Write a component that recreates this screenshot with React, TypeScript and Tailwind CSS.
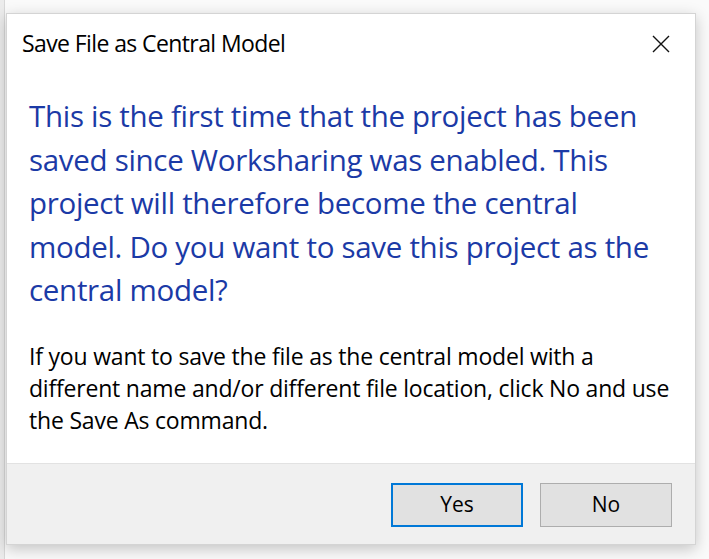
import React from "react";

const font = { fontFamily: '"Open Sans", "Noto Sans", sans-serif' };

export default function App() {
  const blueLines = [
    "This is the first time that the project has been",
    "saved since Worksharing was enabled. This",
    "project will therefore become the central",
    "model. Do you want to save this project as the",
    "central model?",
  ];
  const bodyLines = [
    "If you want to save the file as the central model with a",
    "different name and/or different file location, click No and use",
    "the Save As command.",
  ];
  return (
    <div className="w-[709px] h-[559px] bg-[#fafafa] overflow-hidden relative" style={font}>
      <div className="absolute left-0 top-0 h-full w-[5px] bg-[#ececec] border-r border-[#d8d8d8]" />
      <div className="absolute left-[6px] top-[13px] w-[690px] h-[532px] bg-white border border-[#d4d4d4] shadow-[0_4px_14px_rgba(0,0,0,0.22)] flex flex-col">
        <div className="h-[58px] flex items-center justify-between pl-[15px] pr-[24px] shrink-0">
          <div className="text-[23px] text-black tracking-[-0.6px]">Save File as Central Model</div>
          <svg width="20" height="20" viewBox="0 0 20 20" className="mt-[2px]">
            <path d="M2 2 L18 18 M18 2 L2 18" stroke="#111" strokeWidth="1.4" fill="none" />
          </svg>
        </div>
        <div className="flex-1 pl-[22px] pr-4 pt-[22px]">
          <div className="text-[#1b3aa6] text-[29.5px] leading-[43.5px] tracking-[-0.3px]">
            {blueLines.map((l) => (
              <div key={l} className="whitespace-nowrap">{l}</div>
            ))}
          </div>
          <div className="mt-[28px] text-black text-[23px] leading-[32px] tracking-[-0.2px]">
            {bodyLines.map((l) => (
              <div key={l} className="whitespace-nowrap">{l}</div>
            ))}
          </div>
        </div>
        <div className="h-[81px] shrink-0 bg-[#f0f0f0] border-t border-[#e2e2e2] flex items-start justify-end pr-[23px] pt-[19px] gap-[17px]">
          <button className="w-[132px] h-[44px] bg-[#e1e1e1] border-2 border-[#0078d7] text-[21px] text-black flex items-center justify-center">
            Yes
          </button>
          <button className="w-[132px] h-[44px] bg-[#e1e1e1] border border-[#adadad] text-[21px] text-black flex items-center justify-center">
            No
          </button>
        </div>
      </div>
    </div>
  );
}
